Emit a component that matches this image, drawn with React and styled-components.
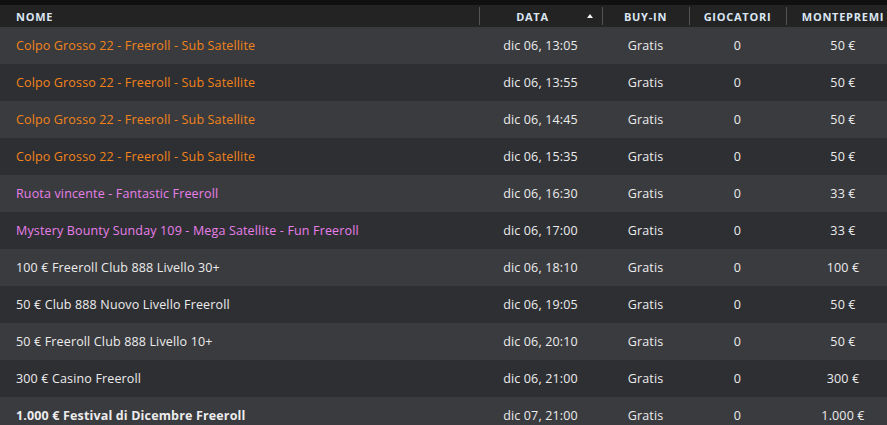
import React from 'react';
import styled, { createGlobalStyle } from 'styled-components';

const GlobalStyle = createGlobalStyle`
  html, body {
    margin: 0;
    padding: 0;
    background: #2e2f33;
    overflow: hidden;
  }
`;

const Wrapper = styled.div`
  width: 887px;
  height: 425px;
  overflow: hidden;
  background: #2e2f33;
  font-family: "Open Sans", "Liberation Sans", sans-serif;
  border-top: 5px solid #101010;
`;

const Table = styled.div`
  width: 900px;
`;

const cols = '479px 123px 87px 97px 114px';

const HeaderRow = styled.div`
  display: grid;
  grid-template-columns: ${cols};
  height: 22px;
  background: #232323;
`;

const HeaderCell = styled.div`
  position: relative;
  display: flex;
  align-items: center;
  justify-content: ${p => (p.$left ? 'flex-start' : 'center')};
  padding-left: ${p => (p.$left ? '16px' : '0')};
  padding-right: ${p => (p.$sort ? '16px' : '0')};
  font-size: 11px;
  font-weight: 700;
  letter-spacing: 0.75px;
  color: #dbe6f3;
  text-transform: uppercase;

  &::before {
    content: '';
    display: ${p => (p.$left ? 'none' : 'block')};
    position: absolute;
    left: 0;
    top: 2px;
    bottom: 2px;
    width: 1px;
    background: #545454;
  }
`;

const SortArrow = styled.span`
  position: absolute;
  right: 9px;
  top: 9px;
  width: 0;
  height: 0;
  border-left: 3.5px solid transparent;
  border-right: 3.5px solid transparent;
  border-bottom: 4px solid #f2f2f2;
`;

const Row = styled.div`
  display: grid;
  grid-template-columns: ${cols};
  height: 37px;
  background: ${p => (p.$odd ? '#3a3b3f' : '#2e2f33')};
  font-size: 12.5px;
  font-weight: 500;
  letter-spacing: 0.15px;
  color: #ececec;
`;

const Cell = styled.div`
  display: flex;
  align-items: center;
  justify-content: ${p => (p.$left ? 'flex-start' : 'center')};
  padding-left: ${p => (p.$left ? '16px' : '0')};
  white-space: nowrap;
`;

const Name = styled(Cell)`
  color: ${p => p.$color};
  font-weight: ${p => (p.$bold ? 700 : 500)};
`;

const colors = {
  orange: '#f2831a',
  pink: '#e77fe8',
  white: '#ececec',
};

const tournaments = [
  { name: 'Colpo Grosso 22 - Freeroll - Sub Satellite', date: 'dic 06, 13:05', prize: '50 €', color: 'orange' },
  { name: 'Colpo Grosso 22 - Freeroll - Sub Satellite', date: 'dic 06, 13:55', prize: '50 €', color: 'orange' },
  { name: 'Colpo Grosso 22 - Freeroll - Sub Satellite', date: 'dic 06, 14:45', prize: '50 €', color: 'orange' },
  { name: 'Colpo Grosso 22 - Freeroll - Sub Satellite', date: 'dic 06, 15:35', prize: '50 €', color: 'orange' },
  { name: 'Ruota vincente - Fantastic Freeroll', date: 'dic 06, 16:30', prize: '33 €', color: 'pink' },
  { name: 'Mystery Bounty Sunday 109 - Mega Satellite - Fun Freeroll', date: 'dic 06, 17:00', prize: '33 €', color: 'pink' },
  { name: '100 € Freeroll Club 888 Livello 30+', date: 'dic 06, 18:10', prize: '100 €', color: 'white' },
  { name: '50 € Club 888 Nuovo Livello Freeroll', date: 'dic 06, 19:05', prize: '50 €', color: 'white' },
  { name: '50 € Freeroll Club 888 Livello 10+', date: 'dic 06, 20:10', prize: '50 €', color: 'white' },
  { name: '300 € Casino Freeroll', date: 'dic 06, 21:00', prize: '300 €', color: 'white' },
  { name: '1.000 € Festival di Dicembre Freeroll', date: 'dic 07, 21:00', prize: '1.000 €', color: 'white', bold: true },
];

const App = () => (
  <Wrapper>
    <GlobalStyle />
    <Table>
      <HeaderRow>
        <HeaderCell $left>Nome</HeaderCell>
        <HeaderCell $sort>
          Data
          <SortArrow />
        </HeaderCell>
        <HeaderCell>Buy-in</HeaderCell>
        <HeaderCell>Giocatori</HeaderCell>
        <HeaderCell>Montepremi</HeaderCell>
      </HeaderRow>
      {tournaments.map((t, i) => (
        <Row key={i} $odd={i % 2 === 0}>
          <Name $left $color={colors[t.color]} $bold={t.bold}>{t.name}</Name>
          <Cell>{t.date}</Cell>
          <Cell>Gratis</Cell>
          <Cell>0</Cell>
          <Cell>{t.prize}</Cell>
        </Row>
      ))}
    </Table>
  </Wrapper>
);

export default App;
